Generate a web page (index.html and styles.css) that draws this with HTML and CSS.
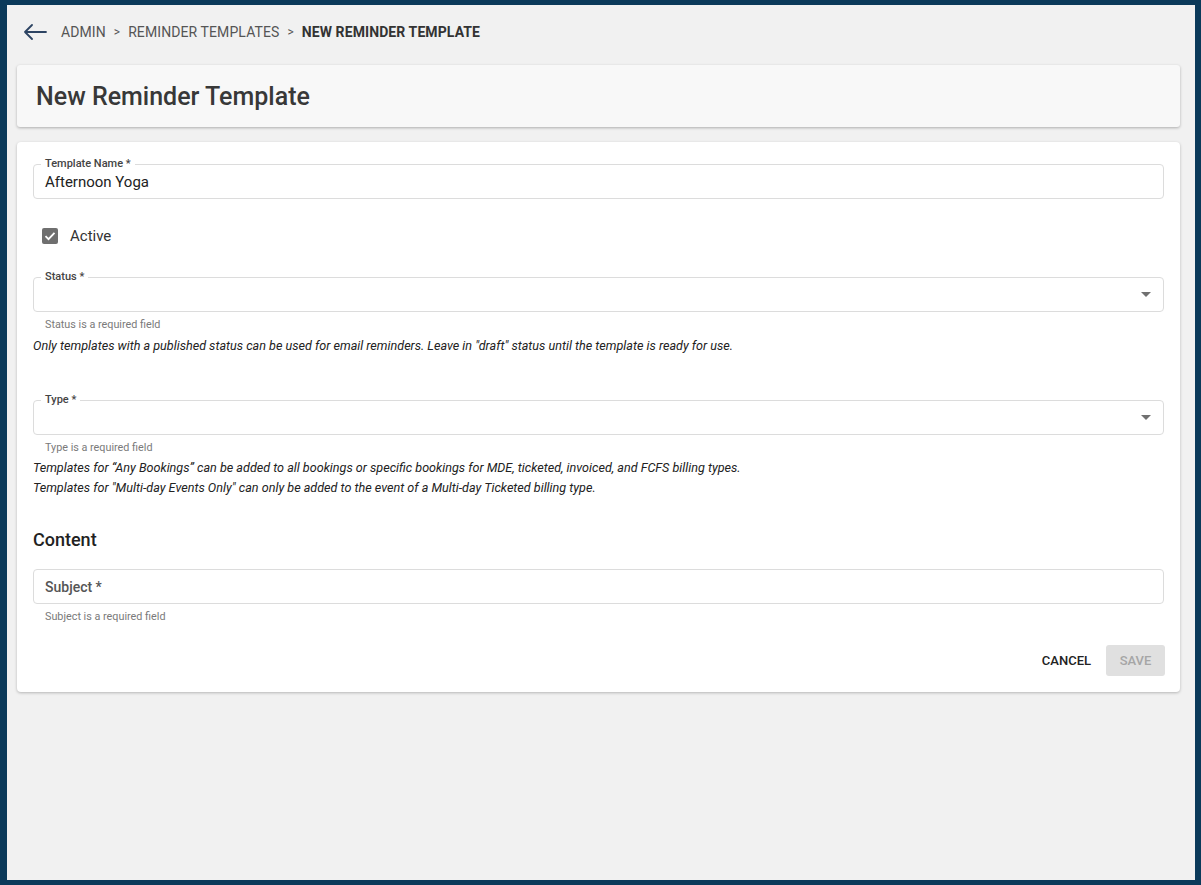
FILE: index.html
```html
<!DOCTYPE html>
<html lang="en">
<head>
    <meta charset="UTF-8">
    <meta name="viewport" content="width=device-width, initial-scale=1.0">
    <title>New Reminder Template</title>
    <link rel="stylesheet" href="styles.css">
</head>
<body>
    <div class="app">
        <nav class="breadcrumb">
            <svg class="back-icon" width="24" height="16" viewBox="0 0 24 16">
                <path d="M23 8H2M9 1L2 8l7 7" fill="none" stroke="#2d4463" stroke-width="1.8" stroke-linecap="round" stroke-linejoin="round"/>
            </svg>
            <span class="crumb">ADMIN</span>
            <span class="sep">&gt;</span>
            <span class="crumb">REMINDER TEMPLATES</span>
            <span class="sep">&gt;</span>
            <span class="crumb current">NEW REMINDER TEMPLATE</span>
        </nav>

        <div class="page-header">
            <h1>New Reminder Template</h1>
        </div>

        <form class="form-card">
            <div class="field">
                <span class="field-label">Template Name *</span>
                <span class="field-value">Afternoon Yoga</span>
            </div>

            <label class="check-row">
                <span class="checkbox">
                    <svg width="12" height="10" viewBox="0 0 12 10">
                        <path d="M1.5 5.2l3 3 6-6.4" fill="none" stroke="#fff" stroke-width="1.8"/>
                    </svg>
                </span>
                Active
            </label>

            <div class="field field-status">
                <span class="field-label">Status *</span>
                <span class="caret"></span>
            </div>
            <div class="helper">Status is a required field</div>
            <p class="note">Only templates with a published status can be used for email reminders. Leave in "draft" status until the template is ready for use.</p>

            <div class="field field-type">
                <span class="field-label">Type *</span>
                <span class="caret"></span>
            </div>
            <div class="helper">Type is a required field</div>
            <p class="note note-type">Templates for “Any Bookings” can be added to all bookings or specific bookings for MDE, ticketed, invoiced, and FCFS billing types.<br>Templates for "Multi-day Events Only" can only be added to the event of a Multi-day Ticketed billing type.</p>

            <h2>Content</h2>

            <div class="field field-subject">
                <span class="placeholder">Subject *</span>
            </div>
            <div class="helper">Subject is a required field</div>

            <div class="actions">
                <button type="button" class="btn-cancel">Cancel</button>
                <button type="button" class="btn-save" disabled>Save</button>
            </div>
        </form>
    </div>
</body>
</html>
```

FILE: styles.css
```css
:root {
    --frame: #0b3a5a;
    --page-bg: #f1f1f1;
    --border: #dcdcdc;
    --text: #333333;
    --muted: #7a7a7a;
}

* {
    box-sizing: border-box;
}

body {
    margin: 0;
    font-family: Roboto, 'Liberation Sans', sans-serif;
    background: var(--frame);
    color: var(--text);
}

.app {
    height: 885px;
    border-style: solid;
    border-color: var(--frame);
    border-width: 5px 7px 5px 7px;
    border-right-width: 6px;
    background: var(--page-bg);
    padding: 0 15px 0 10px;
}

.breadcrumb {
    height: 54px;
    display: flex;
    align-items: center;
    padding-left: 6px;
    font-size: 14px;
    color: #555;
}

.back-icon {
    margin-right: 14px;
}

.crumb {
    letter-spacing: 0.1px;
}

.crumb.current {
    font-weight: 700;
    color: #333;
}

.sep {
    margin: 0 8px;
    font-size: 12px;
}

.page-header {
    margin-top: 6px;
    height: 62px;
    background: #f8f8f8;
    border-radius: 3px;
    box-shadow: 0 1px 3px rgba(0, 0, 0, 0.28);
    display: flex;
    align-items: center;
    padding-left: 19px;
}

h1 {
    margin: 0;
    font-size: 25px;
    font-weight: 500;
    color: #383838;
}

.form-card {
    margin-top: 15px;
    background: #fff;
    border-radius: 4px;
    box-shadow: 0 1px 3px rgba(0, 0, 0, 0.25);
    padding: 22px 16px 16px 16px;
    display: flex;
    flex-direction: column;
}

.field {
    position: relative;
    height: 35px;
    border: 1px solid var(--border);
    border-radius: 4px;
    display: flex;
    align-items: center;
    justify-content: space-between;
    padding: 0 12px 0 11px;
}

.field-label {
    position: absolute;
    top: -8px;
    left: 7px;
    padding: 0 4px;
    background: #fff;
    font-size: 11px;
    font-weight: 500;
    color: #444;
    line-height: 14px;
}

.field-value {
    font-size: 15px;
    color: #222;
}

.caret {
    margin-left: auto;
    width: 0;
    height: 0;
    border-left: 5px solid transparent;
    border-right: 5px solid transparent;
    border-top: 5px solid #707070;
}

.check-row {
    margin: 24px 0 0 9px;
    height: 26px;
    display: flex;
    align-items: center;
    font-size: 15px;
    color: #333;
}

.checkbox {
    width: 16px;
    height: 16px;
    border-radius: 2px;
    background: #6f6f6f;
    display: flex;
    align-items: center;
    justify-content: center;
    margin-right: 12px;
}

.field-status {
    margin-top: 28px;
}

.helper {
    margin-top: 5px;
    padding-left: 12px;
    font-size: 10.8px;
    line-height: 15px;
    color: var(--muted);
}

.note {
    margin: 6px 0 0;
    font-size: 12.6px;
    line-height: 16px;
    font-style: italic;
    color: #222;
}

.field-type {
    margin-top: 46px;
}

.note-type {
    margin-top: 3px;
    line-height: 20px;
}

h2 {
    margin: 30px 0 0;
    font-size: 18px;
    line-height: 24px;
    font-weight: 500;
    color: #222;
}

.field-subject {
    margin-top: 17px;
}

.placeholder {
    font-size: 14px;
    font-weight: 500;
    color: #555;
}

.actions {
    margin-top: 21px;
    display: flex;
    justify-content: flex-end;
    align-items: center;
    gap: 7px;
}

button {
    font-family: inherit;
    font-size: 13px;
    font-weight: 500;
    text-transform: uppercase;
    border: none;
    border-radius: 3px;
    height: 31px;
    cursor: pointer;
}

.btn-cancel {
    background: transparent;
    color: #222;
    padding: 0 8px;
}

.btn-save {
    background: #e0e0e0;
    color: #a6a6a6;
    width: 59px;
    margin-right: -1px;
}
```
